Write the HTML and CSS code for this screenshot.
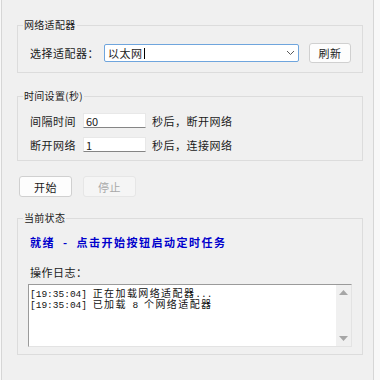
FILE: index.html
```html
<!DOCTYPE html>
<html lang="zh-CN">
<head>
    <meta charset="UTF-8">
    <title>网络定时断开工具</title>
    <link rel="stylesheet" href="styles.css">
</head>
<body>
    <div class="window">
        <fieldset class="group">
            <legend>网络适配器</legend>
            <div class="group-body row adapter-row">
                <label class="label adapter-label">选择适配器：</label>
                <div class="combo">
                    <span class="combo-text">以太网</span><span class="text-caret"></span>
                    <svg class="chevron" width="9" height="6" viewBox="0 0 9 6">
                        <path d="M1 1 L4.5 4.5 L8 1" fill="none" stroke="#5a5a5a" stroke-width="1"/>
                    </svg>
                </div>
                <button class="btn refresh-btn">刷新</button>
            </div>
        </fieldset>

        <fieldset class="group time-group">
            <legend>时间设置(秒)</legend>
            <div class="group-body time-body">
                <div class="row time-row">
                    <span class="label">间隔时间</span>
                    <input class="num-input" type="text" value="60">
                    <span class="label suffix">秒后，断开网络</span>
                </div>
                <div class="row time-row">
                    <span class="label">断开网络</span>
                    <input class="num-input" type="text" value="1">
                    <span class="label suffix">秒后，连接网络</span>
                </div>
            </div>
        </fieldset>

        <div class="actions">
            <button class="btn action-btn">开始</button>
            <button class="btn action-btn" disabled>停止</button>
        </div>

        <fieldset class="group status-group">
            <legend>当前状态</legend>
            <div class="group-body status-body">
                <div class="status-text">就绪 - 点击开始按钮启动定时任务</div>
                <div class="label log-label">操作日志：</div>
                <div class="log">
                    <div class="log-text">
                        <div class="log-line">[19:35:04] <span class="cn">正在加载网络适配器</span>...</div>
                        <div class="log-line">[19:35:04] <span class="cn">已加载</span> 8 <span class="cn">个网络适配器</span></div>
                    </div>
                    <div class="scrollbar">
                        <svg width="9" height="5" viewBox="0 0 9 5"><path d="M0 5 L4.5 0 L9 5 Z" fill="#a6a6a6"/></svg>
                        <svg width="9" height="5" viewBox="0 0 9 5"><path d="M0 0 L4.5 5 L9 0 Z" fill="#a6a6a6"/></svg>
                    </div>
                </div>
            </div>
        </fieldset>
    </div>
</body>
</html>
```

FILE: styles.css
```css
body {
    margin: 0;
    background-color: #f8f8f8;
    font-family: "Noto Sans CJK SC", "Microsoft YaHei", sans-serif;
    font-size: 11px;
    color: #1a1a1a;
}
.window {
    margin-left: 1px;
    width: 373px;
    height: 380px;
    box-sizing: border-box;
    padding: 19px 0 0 15px;
    background-color: #f0f0f0;
    border-left: 1px solid #d6d6d6;
    border-right: 1px solid #d6d6d6;
}
.group {
    margin: 0;
    padding: 0 0 0 5px;
    width: 346px;
    min-width: 0;
    box-sizing: border-box;
    border: 1px solid #dcdcdc;
}
legend {
    padding: 0 1px;
    font-size: 10px;
    line-height: 12px;
    letter-spacing: 0.3px;
}
.group-body {
    padding: 12px 0 9px 7px;
}
.row {
    display: flex;
    align-items: center;
}
.label {
    line-height: 14px;
    letter-spacing: 0.5px;
    white-space: nowrap;
}
.adapter-row {
    height: 20px;
}
.adapter-label {
    width: 74px;
}
.combo {
    width: 195px;
    height: 18px;
    box-sizing: border-box;
    display: flex;
    align-items: center;
    padding-left: 3px;
    background-color: #fff;
    border: 1px solid #6fa5dd;
    border-radius: 2px;
}
.combo-text {
    letter-spacing: 0.5px;
    line-height: 14px;
}
.text-caret {
    width: 1px;
    height: 11px;
    background-color: #000;
    margin-left: 1px;
}
.chevron {
    margin-left: auto;
    margin-right: 3px;
}
.btn {
    font: inherit;
    color: #1a1a1a;
    background-color: #fdfdfd;
    border: 1px solid #d0d0d0;
    border-radius: 3px;
    padding: 0;
    letter-spacing: 0.5px;
}
.btn:disabled {
    color: #a8a8a8;
    background-color: #f5f5f5;
    border-color: #e6e6e6;
}
.refresh-btn {
    width: 42px;
    height: 20px;
    margin-left: 10px;
}
.time-group {
    margin-top: 17px;
}
.time-body {
    padding: 11px 0 8px 7px;
}
.time-row {
    height: 15px;
}
.time-row + .time-row {
    margin-top: 9px;
}
.num-input {
    font: inherit;
    width: 63px;
    height: 15px;
    box-sizing: border-box;
    margin-left: 7px;
    padding: 0 0 0 2px;
    background-color: #fff;
    border: 1px solid #e8e8e8;
    border-bottom-color: #858585;
    color: #1a1a1a;
    outline: none;
}
.suffix {
    margin-left: 6px;
}
.actions {
    display: flex;
    gap: 11px;
    margin: 15px 0 0 2px;
}
.action-btn {
    width: 53px;
    height: 21px;
}
.status-group {
    margin-top: 15px;
}
.status-body {
    padding: 11px 0 7px 7px;
}
.status-text {
    color: #0000cc;
    font-weight: bold;
    line-height: 14px;
    letter-spacing: 1.5px;
    word-spacing: 4px;
}
.log-label {
    margin-top: 16px;
}
.log {
    display: flex;
    width: 324px;
    height: 63px;
    box-sizing: border-box;
    margin: 5px 0 0 -2px;
    background-color: #fff;
    border: 1px solid #e3e3e3;
    border-top-color: #9a9a9a;
    border-left-color: #9a9a9a;
}
.log-text {
    flex: 1;
    padding: 2px 0 0 1px;
    font-family: "Liberation Mono", "Noto Sans CJK SC", monospace;
    font-size: 9.5px;
    color: #111;
    white-space: nowrap;
}
.log-line {
    height: 11px;
    line-height: 11px;
}
.cn {
    font-family: "Noto Sans CJK SC", sans-serif;
    font-size: 10px;
    line-height: 11px;
    letter-spacing: 1.4px;
}
.scrollbar {
    width: 15px;
    display: flex;
    flex-direction: column;
    justify-content: space-between;
    align-items: center;
    padding: 5px 0;
    background-color: #f0f0f0;
}
```
